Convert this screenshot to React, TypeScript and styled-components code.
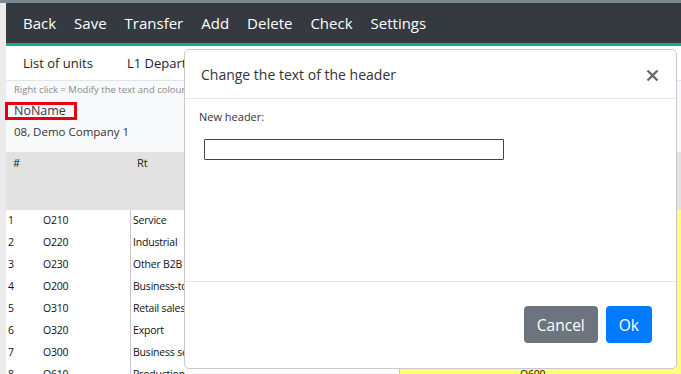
import React from 'react';
import styled, { createGlobalStyle } from 'styled-components';

const GlobalStyle = createGlobalStyle`
    html, body {
        margin: 0;
        padding: 0;
        background: #ebebeb;
        font-family: "Open Sans", "Liberation Sans", sans-serif;
        overflow: hidden;
    }
`

const menu = ['Back', 'Save', 'Transfer', 'Add', 'Delete', 'Check', 'Settings']

const rows = [
    ['1', 'O210', 'Service'],
    ['2', 'O220', 'Industrial'],
    ['3', 'O230', 'Other B2B'],
    ['4', 'O200', 'Business-to-business'],
    ['5', 'O310', 'Retail sales'],
    ['6', 'O320', 'Export'],
    ['7', 'O300', 'Business services'],
    ['8', 'O610', 'Production'],
]

const App: React.FC = () => {
    return (
        <>
            <GlobalStyle />
            <Page>
                <TopStrip />
                <Content>
                    <NavBar>
                        {menu.map(m => <NavItem key={m}>{m}</NavItem>)}
                    </NavBar>
                    <Tabs>
                        <Tab>List of units</Tab>
                        <Tab>L1 Departments</Tab>
                    </Tabs>
                    <Info>
                        <Hint>Right click = Modify the text and colour of the header</Hint>
                        <HeaderName>NoName</HeaderName>
                        <Company>08, Demo Company 1</Company>
                    </Info>
                    <Table>
                        <HeadRow>
                            <HeadCell $w={124}>#</HeadCell>
                            <HeadCell $w={546}>Rt</HeadCell>
                            <HeadCell $w={60}>Bo</HeadCell>
                        </HeadRow>
                        {rows.map(r => (
                            <Row key={r[0]}>
                                <NumCell>{r[0]}</NumCell>
                                <CodeCell>{r[1]}</CodeCell>
                                <NameCell>{r[2]}</NameCell>
                                <YellowCell>{r[0] === '8' ? 'O600' : ''}</YellowCell>
                            </Row>
                        ))}
                    </Table>
                </Content>
            </Page>
            <Modal>
                <ModalHeader>
                    <ModalTitle>Change the text of the header</ModalTitle>
                    <CloseBtn>
                        <svg width="13" height="13" viewBox="0 0 13 13">
                            <path d="M1.5 1.5 L11.5 11.5 M11.5 1.5 L1.5 11.5" stroke="#6b6b6b" strokeWidth="2.4" strokeLinecap="butt" />
                        </svg>
                    </CloseBtn>
                </ModalHeader>
                <ModalBody>
                    <Label>New header:</Label>
                    <TextInput type="text" />
                </ModalBody>
                <ModalFooter>
                    <Button $variant="secondary">Cancel</Button>
                    <Button $variant="primary">Ok</Button>
                </ModalFooter>
            </Modal>
        </>
    )
}

export default App;

const Page = styled.div`
    width: 681px;
    height: 374px;
    overflow: hidden;
`

const TopStrip = styled.div`
    height: 3px;
    background: #7c878f;
`

const Content = styled.div`
    margin-left: 6px;
    background: #fff;
`

const NavBar = styled.nav`
    display: flex;
    align-items: center;
    height: 40px;
    padding-left: 17px;
    gap: 18px;
    background: #343a40;
    border-bottom: 3px solid #19a69a;
`

const NavItem = styled.span`
    color: #fff;
    font-size: 15px;
    line-height: 1;
`

const Tabs = styled.div`
    display: flex;
    align-items: center;
    height: 34px;
    padding-left: 17px;
    gap: 34px;
    background: #fff;
    border-bottom: 1px solid #e2e5e8;
    white-space: nowrap;
    overflow: hidden;
`

const Tab = styled.span`
    font-size: 13px;
    color: #212529;
`

const Info = styled.div`
    height: 71px;
    background: #f8f9fa;
    padding-top: 2px;
    box-sizing: border-box;
`

const Hint = styled.div`
    font-size: 9.5px;
    color: #8a8a8a;
    padding-left: 8px;
    line-height: 13px;
    white-space: nowrap;
`

const HeaderName = styled.div`
    display: inline-block;
    margin-top: 6px;
    margin-left: -1px;
    padding: 0 8px 0 6px;
    border: 3px solid #e8000b;
    font-size: 12.5px;
    line-height: 12px;
    color: #3a3a3a;
`

const Company = styled.div`
    font-size: 11.5px;
    color: #333;
    padding-left: 8px;
    margin-top: 4px;
`

const Table = styled.div`
    display: flex;
    flex-direction: column;
`

const HeadRow = styled.div`
    display: flex;
    height: 58px;
    background: #e2e2e2;
`

const HeadCell = styled.div<{ $w: number }>`
    width: ${p => p.$w}px;
    flex: none;
    padding: 3px 0 0 7px;
    box-sizing: border-box;
    font-size: 11px;
    color: #222;
`

const Row = styled.div`
    display: flex;
    height: 22px;
    align-items: center;
    font-size: 10.5px;
    letter-spacing: -0.2px;
    color: #111;
    line-height: 1;
`

const NumCell = styled.div`
    width: 35px;
    padding-left: 2px;
    padding-bottom: 1px;
`

const CodeCell = styled.div`
    width: 87px;
    padding-bottom: 1px;
`

const NameCell = styled.div`
    width: 269px;
    height: 100%;
    box-sizing: border-box;
    display: flex;
    align-items: center;
    padding: 0 0 1px 2px;
    border-left: 1px solid #c8c8c8;
    white-space: nowrap;
    overflow: hidden;
`

const YellowCell = styled.div`
    flex: 1;
    height: 100%;
    box-sizing: border-box;
    background: #ffff7f;
    border-left: 1px solid #c8c8c8;
    padding: 0 0 1px 120px;
    display: flex;
    align-items: center;
`

const Modal = styled.div`
    position: absolute;
    left: 184px;
    top: 49px;
    width: 493px;
    height: 320px;
    box-sizing: border-box;
    background: #fff;
    border: 1px solid #c9c9c9;
    border-radius: 5px;
    display: flex;
    flex-direction: column;
`

const ModalHeader = styled.div`
    height: 49px;
    box-sizing: border-box;
    display: flex;
    align-items: center;
    justify-content: space-between;
    padding: 0 17px 0 16px;
    border-bottom: 1px solid #e6e6e6;
`

const ModalTitle = styled.div`
    font-size: 14px;
    color: #333;
`

const CloseBtn = styled.span`
    display: flex;
    margin-top: 3px;
`

const ModalBody = styled.div`
    flex: 1;
    padding: 10px 0 0 14px;
    border-bottom: 1px solid #e6e6e6;
`

const Label = styled.div`
    font-size: 11px;
    color: #333;
`

const TextInput = styled.input`
    display: block;
    margin: 15px 0 0 5px;
    width: 300px;
    height: 21px;
    box-sizing: border-box;
    border: 1px solid #444;
    border-radius: 1px;
    padding: 0 4px;
    outline: none;
`

const ModalFooter = styled.div`
    height: 86px;
    display: flex;
    justify-content: flex-end;
    align-items: flex-start;
    padding: 24px 24px 0 0;
    box-sizing: border-box;
    gap: 8px;
`

const Button = styled.button<{ $variant: 'primary' | 'secondary' }>`
    height: 37px;
    padding: 0 13px;
    border: none;
    border-radius: 4px;
    font-family: "Open Sans", "Liberation Sans", sans-serif;
    font-size: 15.5px;
    color: #fff;
    background: ${p => p.$variant === 'primary' ? '#007bff' : '#6c757d'};
`
